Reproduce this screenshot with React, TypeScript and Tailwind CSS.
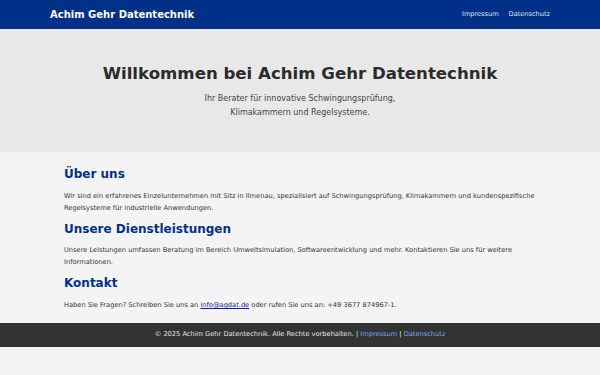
export default function App() {
  return (
    <div className="min-h-[375px] bg-[#f4f4f4] text-[#333]" style={{ fontFamily: '"DejaVu Sans", sans-serif' }}>
      {/* Kopfzeile */}
      <header className="bg-[#003087] h-[29px] px-[50px] flex items-center justify-between">
        <h1 className="text-white font-bold text-[10px]">Achim Gehr Datentechnik</h1>
        <nav className="flex gap-[10px] text-[6.6px] text-[#dfe6f5]">
          <a href="#">Impressum</a>
          <a href="#">Datenschutz</a>
        </nav>
      </header>

      {/* Hero */}
      <section className="bg-[#e8e8e8] h-[123px] flex flex-col items-center pt-[34px]">
        <h2 className="text-[16.6px] font-bold text-[#2b2b2b] leading-[22px]">Willkommen bei Achim Gehr Datentechnik</h2>
        <p className="text-[8px] text-[#444] text-center leading-[14px] mt-[7px]">
          Ihr Berater für innovative Schwingungsprüfung,
          <br />
          Klimakammern und Regelsysteme.
        </p>
      </section>

      {/* Inhalt */}
      <main className="px-[64px] pt-[12px] pb-[11px]">
        <h3 className="text-[12px] font-bold text-[#003087] leading-[20px]">Über uns</h3>
        <p className="text-[6.67px] leading-[11.5px] mt-[7px]">
          Wir sind ein erfahrenes Einzelunternehmen mit Sitz in Ilmenau, spezialisiert auf Schwingungsprüfung, Klimakammern und kundenspezifische Regelsysteme für industrielle Anwendungen.
        </p>
        <h3 className="text-[12px] font-bold text-[#003087] leading-[20px] mt-[5px]">Unsere Dienstleistungen</h3>
        <p className="text-[6.67px] leading-[11.5px] mt-[6px]">
          Unsere Leistungen umfassen Beratung im Bereich Umweltsimulation, Softwareentwicklung und mehr. Kontaktieren Sie uns für weitere Informationen.
        </p>
        <h3 className="text-[12px] font-bold text-[#003087] leading-[20px] mt-[5px]">Kontakt</h3>
        <p className="text-[6.67px] leading-[11.5px] mt-[7px]">
          Haben Sie Fragen? Schreiben Sie uns an{' '}
          <a href="#" className="text-[#1a1aa6] underline">info@agdat.de</a> oder rufen Sie uns an: +49 3677 874967-1.
        </p>
      </main>

      {/* Fußzeile */}
      <footer className="bg-[#333] h-[24px] flex items-center justify-center text-[6.65px] text-[#e6e6e6]">
        <p>
          © 2025 Achim Gehr Datentechnik. Alle Rechte vorbehalten. |{' '}
          <a href="#" className="text-[#7aa6e8]">Impressum</a> |{' '}
          <a href="#" className="text-[#7aa6e8]">Datenschutz</a>
        </p>
      </footer>
    </div>
  );
}
